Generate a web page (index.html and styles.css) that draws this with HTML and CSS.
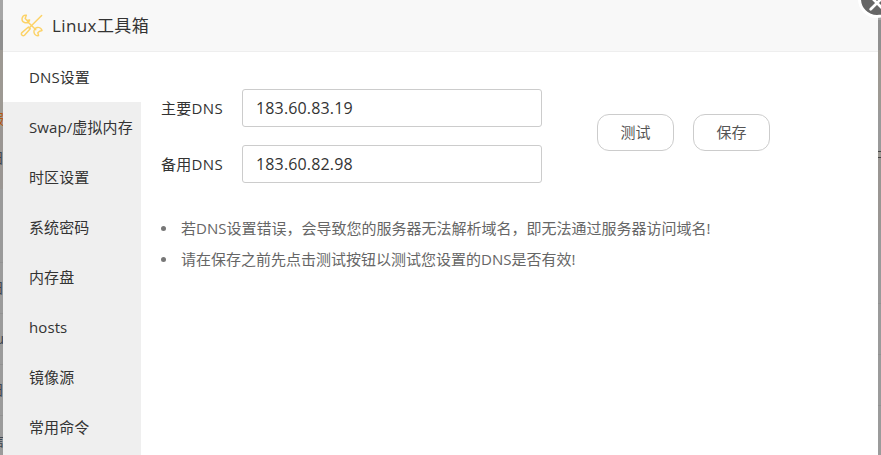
FILE: index.html
```html
<!DOCTYPE html>
<html lang="zh-CN">
<head>
<meta charset="utf-8">
<title>Linux工具箱</title>
<link rel="stylesheet" href="styles.css">
</head>
<body>
<div class="screen">
  <div class="strip strip-left" aria-hidden="true">
    <div class="band band-top"></div>
    <div class="band band-dark"></div>
    <div class="band band-a"></div>
    <div class="band band-glyph band-orange"><span>服</span></div>
    <div class="band band-glyph band-b"><span>日</span></div>
    <div class="band band-c"></div>
    <div class="band band-row band-glyph"><span>日</span></div>
    <div class="band band-row band-glyph"><span>u</span></div>
    <div class="band band-row band-glyph"><span>日</span></div>
    <div class="band band-row band-glyph"><span>信</span></div>
  </div>
  <main class="dialog">
    <header class="head">
      <svg class="logo" viewBox="0 0 24 24" fill="none" stroke="#fcd266" stroke-width="1.5" stroke-linecap="round" stroke-linejoin="round">
        <path d="M6.6 1.200A4 4 0 1 0 10 6.200L7.400 6.700 5.400 4.600Z"/>
        <path d="M8 8 16.500 16.500"/>
        <path d="M22.600 1.500 9.500 14.600"/>
        <path d="M8.800 13.600 10.700 15.500 4.700 22.200A2 2 0 0 1 1.700 19.700Z"/>
        <path d="M23 17.200A4.300 4.300 0 1 0 19.400 22.600L18.600 19.600 20.400 18Z"/>
      </svg>
      <h1 class="title">Linux工具箱</h1>
    </header>
    <div class="body">
      <nav class="nav">
        <a class="nav-item active">DNS设置</a>
        <a class="nav-item">Swap/虚拟内存</a>
        <a class="nav-item">时区设置</a>
        <a class="nav-item">系统密码</a>
        <a class="nav-item">内存盘</a>
        <a class="nav-item">hosts</a>
        <a class="nav-item">镜像源</a>
        <a class="nav-item">常用命令</a>
      </nav>
      <section class="content">
        <div class="form-row">
          <div class="fields">
            <label class="field"><span class="field-label">主要DNS</span><input class="field-input" value="183.60.83.19"></label>
            <label class="field"><span class="field-label">备用DNS</span><input class="field-input" value="183.60.82.98"></label>
          </div>
          <div class="actions">
            <button class="btn">测试</button>
            <button class="btn">保存</button>
          </div>
        </div>
        <ul class="tips">
          <li>若DNS设置错误，会导致您的服务器无法解析域名，即无法通过服务器访问域名!</li>
          <li>请在保存之前先点击测试按钮以测试您设置的DNS是否有效!</li>
        </ul>
      </section>
    </div>
  </main>
  <div class="strip strip-right" aria-hidden="true">
    <div class="band band-top"></div>
    <div class="band band-dark"></div>
    <div class="band band-a"></div>
    <div class="band band-marks"></div>
    <div class="band band-b"></div>
    <div class="band band-c"></div>
    <div class="band band-row"></div>
    <div class="band band-row"></div>
    <div class="band band-row"></div>
    <div class="band band-row"></div>
  </div>
  <div class="close" aria-label="关闭">
    <svg class="close-x" viewBox="0 0 20 20" stroke="#fff" stroke-width="3" stroke-linecap="round"><path d="M3 3 17 17M17 3 3 17"/></svg>
  </div>
</div>
</body>
</html>
```
FILE: styles.css
```css
* { box-sizing: border-box; }
html, body { margin: 0; height: 100%; overflow: hidden; }
body {
  font-family: "Open Sans", "Noto Sans CJK SC", sans-serif;
  font-size: 15px;
  color: #333;
  background: #999;
}
.screen {
  position: relative;
  display: flex;
  width: 881px;
  height: 455px;
  overflow: hidden;
}
.strip {
  flex: 0 0 3px;
  display: flex;
  flex-direction: column;
  overflow: hidden;
  background: #9a9a9a;
}
.band { flex: 0 0 auto; overflow: hidden; position: relative; }
.band-top { height: 20px; background: #a6a6a6; }
.band-dark { height: 30px; background: #8f8f8f; }
.band-a { height: 60px; background: #9d9993; }
.band-orange { height: 17px; background: #9d9993; color: #b4570f; }
.band-b { height: 62px; background: #9a9693; }
.band-c { height: 73px; background: #9a9a9a; }
.band-row { height: 51px; background: #9b9b9b; border-top: 1px solid #929292; }
.band-marks { height: 17px; background: #9d9993; }
.band-glyph { display: flex; align-items: center; justify-content: flex-end; font-size: 14px; line-height: 1; color: #3d4650; }
.band-glyph span { flex: none; margin-right: -1px; }
.band-orange { color: #b4570f; }
.strip-right .band-marks { border-top: 1px solid #444; border-bottom: 1px solid #444; height: 7px; margin-top: 41px; }
.strip-right .band-b { height: 72px; }

.dialog {
  flex: 0 0 875px;
  height: 620px;
  background: #fff;
  display: flex;
  flex-direction: column;
}
.head {
  flex: 0 0 52px;
  display: flex;
  align-items: center;
  gap: 9px;
  padding: 0 0 1px 17px;
  background: #f8f8f8;
  border-bottom: 1px solid #eee;
}
.logo { width: 23px; height: 23px; flex: none; }
.title {
  margin: 0;
  font-size: 17px;
  font-weight: 400;
  color: #333;
  line-height: 1;
  letter-spacing: .4px;
}
.body { display: flex; flex: 1; }
.nav {
  flex: 0 0 138px;
  background: #efefef;
  display: flex;
  flex-direction: column;
}
.nav-item {
  height: 50px;
  line-height: 50px;
  padding-left: 26px;
  font-size: 15px;
  letter-spacing: .1px;
  color: #333;
  white-space: nowrap;
}
.nav-item.active { background: #fff; }
.content { flex: 1; padding: 37px 0 0 20px; }
.form-row { display: flex; align-items: flex-start; }
.fields { display: flex; flex-direction: column; gap: 18px; }
.field { display: flex; align-items: center; }
.field-label { width: 81px; padding-bottom: 2px; font-size: 15px; letter-spacing: .3px; color: #333; }
.field-input {
  width: 300px;
  height: 38px;
  padding: 0 13px;
  border: 1px solid #ccc;
  border-radius: 3px;
  font: inherit;
  font-size: 16px;
  letter-spacing: .15px;
  color: #333;
  background: #fff;
  outline: none;
}
.actions { display: flex; gap: 19px; margin: 25px 0 0 55px; }
.btn {
  width: 77px;
  height: 37px;
  padding: 0 0 2px;
  border: 1px solid #ccc;
  border-radius: 12px;
  background: #fff;
  font: inherit;
  font-size: 15px;
  color: #555;
}
.tips {
  margin: 30px 0 0;
  padding: 0;
  list-style: none;
  color: #666;
  font-size: 15px;
  line-height: 31px;
}
.tips li { display: flex; align-items: center; gap: 15px; }
.tips li::before {
  content: "";
  flex: none;
  width: 5px;
  height: 5px;
  border-radius: 50%;
  background: #777;
}
.close {
  position: absolute;
  left: 858px;
  top: -20px;
  width: 38px;
  height: 38px;
  border-radius: 50%;
  background: #666;
  border: 3px solid #fff;
  display: flex;
  align-items: flex-end;
  justify-content: center;
  padding-bottom: 3px;
}
.close-x { width: 18px; height: 18px; }
```
